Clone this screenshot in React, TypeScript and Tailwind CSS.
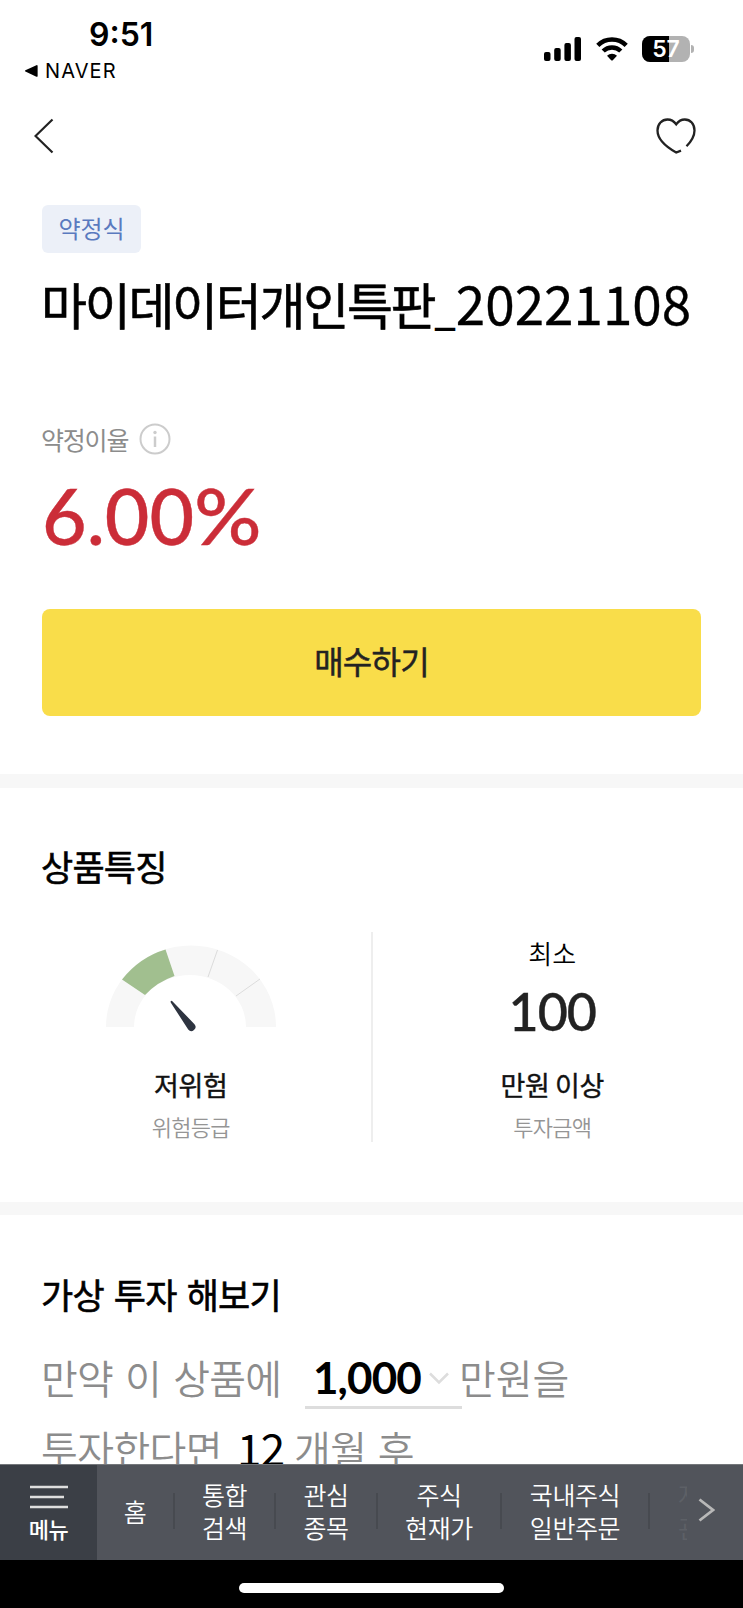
import React from 'react';

interface FeatureProps {
  children: React.ReactNode;
  value: string;
  label: string;
  className: string;
}

const StatusBar: React.FC = () => (
  <div className="h-[88px] flex justify-between font-['Inter',sans-serif] text-black">
    <div className="pl-6">
      <div className="h-8 mt-[19px] pl-[65px] text-[32px] leading-8 font-semibold">9:51</div>
      <div className="flex items-center h-6 mt-2">
        <svg width="14" height="14" viewBox="0 0 14 14">
          <path d="M12.4 1.2 1.4 6.2q-1 .7 0 1.4l11 5.2q1.2.3 1.2-.9V2q0-1.200-1.200-.8Z" fill="#000" />
        </svg>
        <span className="ml-[7px] text-[20px] leading-6 tracking-[1.1px]">NAVER</span>
      </div>
    </div>
    <div className="flex items-center gap-[15px] h-[26px] mt-9 pr-[49px]">
      <svg width="37" height="24" viewBox="0 0 37 24">
        <rect x="0" y="15" width="6.500" height="9" rx="2" />
        <rect x="10.200" y="11" width="6.500" height="13" rx="2" />
        <rect x="20.400" y="6" width="6.500" height="18" rx="2" />
        <rect x="30.500" y="0" width="6.500" height="24" rx="2" />
      </svg>
      <svg width="32" height="24" viewBox="0 0 32 24" fill="none" stroke="#000" strokeWidth="4.500">
        <path d="M1.800 8.300a20.200 20.200 0 0 1 28.400 0" />
        <path d="M7.200 14a12.600 12.600 0 0 1 17.600 0" />
        <path d="M11 18.800a7.300 7.300 0 0 1 10 0l-4.200 4.400q-.8.700-1.600 0Z" fill="#000" stroke="none" />
      </svg>
      <div className="flex items-center gap-px -ml-px">
        <div className="relative w-12 h-[26px] rounded-lg overflow-hidden bg-[#b2b2b2]">
          <div className="w-[27px] h-full bg-black" />
          <span className="absolute inset-0 text-center text-white text-[23px] leading-[26px] font-semibold">57</span>
        </div>
        <div className="w-[3px] h-2 rounded-r-full bg-[#b2b2b2]" />
      </div>
    </div>
  </div>
);

const RiskGauge: React.FC = () => (
  <svg width="172" height="88" viewBox="0 0 172 88">
    <path d="M1 82a85 81.500 0 0 1 170 0h-30a56 52 0 0 0-112 0Z" fill="#f7f7f7" />
    <path d="M17 34.500Q35 12 60.500 4.500l9 26.500Q52 37 40 50Z" fill="#a1bf8f" />
    <path d="m112.500 5-9.500 27M155 34l-24 17" stroke="#dcdcdc" />
    <path d="M65.600 56.300q1-.9 2 .1L89.500 79.200a4 4 0 0 1-6.300 5.200L65.700 57.600Z" fill="#2e3440" />
  </svg>
);

const Feature: React.FC<FeatureProps> = ({ children, value, label, className }) => (
  <div className={`flex-1 flex flex-col items-center ${className}`}>
    <div className="h-[120px] flex flex-col items-center">{children}</div>
    <div className="mt-[27px] h-8 text-[27px] leading-8 tracking-[-0.4px] text-[#111] [-webkit-text-stroke:0.4px_#111]">{value}</div>
    <div className="mt-[9px] h-8 text-[22px] leading-8 font-[350] tracking-[-0.7px] text-[#959595]">{label}</div>
  </div>
);

const Separator: React.FC = () => <div className="w-[2px] h-9 bg-[#474a50]" />;

const BottomNav: React.FC = () => (
  <nav className="h-24 flex bg-[#51545b] border-t border-[#74777b] text-[25px] leading-[33px] font-[350] text-white text-center whitespace-nowrap">
    <div className="w-[97px] bg-[#3b3f46] flex flex-col items-center">
      <svg className="mt-[19px]" width="38" height="26" viewBox="0 0 38 26" stroke="#dedede" strokeWidth="2.600">
        <path d="M0 3h38M0 13h34M0 23h38" />
      </svg>
      <div className="mt-[2px] text-[22px] leading-8 font-medium tracking-[-0.5px]">메뉴</div>
    </div>
    <div className="relative flex-1 flex items-center pb-[3px] overflow-hidden tracking-[-0.4px]">
      <div className="w-[76px]">홈</div>
      <Separator />
      <div className="w-[99px]">통합<br />검색</div>
      <Separator />
      <div className="w-[100px]">관심<br />종목</div>
      <Separator />
      <div className="w-[122px]">주식<br />현재가</div>
      <Separator />
      <div className="w-[146px]">국내주식<br />일반주문</div>
      <Separator />
      <div className="pl-7 text-[#5d6066]">자<br />관</div>
      <div className="absolute right-0 top-0 h-full w-[56px] flex items-center pb-[5px] bg-[#51545b]">
        <svg className="ml-[11px]" width="17" height="24" viewBox="0 0 17 24" fill="none" stroke="#b8b8b8" strokeWidth="2.800">
          <path d="M1.500 1.500 15 12 1.500 22.500" />
        </svg>
      </div>
    </div>
  </nav>
);

const App: React.FC = () => {
  return (
    <div className="w-[743px] h-[1608px] overflow-hidden flex flex-col bg-white text-black font-['Noto_Sans_CJK_KR',sans-serif]">
      <StatusBar />

      <header className="h-[96px] flex items-center justify-between pl-[34px] pr-[47px]">
        <svg width="20" height="36" viewBox="0 0 20 36" fill="none" stroke="#222" strokeWidth="2.200">
          <path d="M18.500 1.500 1.500 18l17 16.500" />
        </svg>
        <svg width="40" height="36" viewBox="0 0 40 36" fill="none" stroke="#222" strokeWidth="2.300">
          <path d="M25 32.600l-4.800 1.900Q1.500 24 1.500 12.500C1.500 6 6 1.500 11.500 1.500q5.200 0 8.700 4.800 3.500-4.800 8.600-4.800c5.500 0 9.700 4.500 9.700 11q0 7.500-8 15.800" />
        </svg>
      </header>

      <main className="h-[1280px] overflow-hidden">
        <section className="px-[42px] pt-[21px] h-[590px]">
          <div className="w-[99px] h-12 rounded-md bg-[#ecf0f8] text-center text-[24px] leading-[46px] text-[#5a7abf]">약정식</div>
          <h1 className="-ml-px mt-[14px] h-[70px] flex items-baseline whitespace-nowrap leading-[70px]">
            <span className="text-[50px] tracking-[-2.300px] [-webkit-text-stroke:0.6px_#000]">마이데이터개인특판</span>
            <span className="text-[38px] font-bold">_</span>
            <span className="text-[53px] [-webkit-text-stroke:0.3px_#000]">20221108</span>
          </h1>
          <div className="mt-[84px] flex items-center gap-[10px] h-9">
            <span className="-mt-px -ml-px mr-px text-[25px] leading-9 tracking-[-1.200px] text-[#8c8c8c]">약정이율</span>
            <svg width="32" height="32" viewBox="0 0 32 32" fill="none" stroke="#ccc" strokeWidth="2">
              <circle cx="16" cy="16" r="14.500" />
              <path d="M16 13.500V24" strokeWidth="2.500" />
              <circle cx="16" cy="9.500" r="1.700" fill="#ccc" stroke="none" />
            </svg>
          </div>
          <div className="mt-[12px] h-[92px] font-['Lato',sans-serif] text-[77px] leading-[92px] font-medium text-[#cb2d38] [-webkit-text-stroke:0.4px_#cb2d38]">
            6.00<span className="inline-block origin-left scale-x-[1.09]">%</span>
          </div>
          <button className="mt-[48px] pb-[5px] block w-full h-[107px] rounded-lg bg-[#f9dd4a] text-[32px] tracking-[-0.8px] text-[#222] [-webkit-text-stroke:0.5px_#222]">매수하기</button>
        </section>

        <section className="h-[428px] border-t-[14px] border-[#f7f7f7]">
          <h2 className="px-[41px] mt-[54px] h-12 text-[35px] leading-[48px] tracking-[-0.8px] [-webkit-text-stroke:0.6px_#000]">상품특징</h2>
          <div className="mt-[42px] flex h-[210px]">
            <Feature value="저위험" label="위험등급" className="pl-[11px]">
              <div className="mt-[13px]"><RiskGauge /></div>
            </Feature>
            <div className="w-[2px] bg-[#eee]" />
            <Feature value="만원 이상" label="투자금액" className="pr-[11px]">
              <div className="mt-[5px] text-[26px] leading-8 font-[350]">최소</div>
              <div className="mt-3 font-['Lato',sans-serif] text-[52px] leading-[60px] font-medium tracking-[-1px] text-[#222] [-webkit-text-stroke:0.4px_#222]">100</div>
            </Feature>
          </div>
        </section>

        <section className="border-t-[13px] border-[#f7f7f7] px-[42px]">
          <h2 className="-ml-px mt-[55px] h-12 text-[35px] leading-[48px] tracking-[-0.8px] [word-spacing:3px] [-webkit-text-stroke:0.6px_#000]">가상 투자 해보기</h2>
          <div className="mt-[22px] h-[71px] flex whitespace-nowrap text-[40px] leading-[74px] font-[350] tracking-[-0.8px] [word-spacing:4px] text-[#8c8c8c]">
            <span className="-ml-px w-[264px]">만약 이 상품에</span>
            <div className="w-[157px] h-[69px] flex items-center pl-2 pt-[8px] border-b-[3px] border-[#ddd]">
              <span className="font-['Lato',sans-serif] text-[44px] font-bold tracking-[-0.9px] text-black">1,000</span>
              <svg className="ml-2 mt-[2px]" width="20" height="13" viewBox="0 0 20 13" fill="none" stroke="#ddd" strokeWidth="2.500">
                <path d="m1 1.500 9 9 9-9" />
              </svg>
            </div>
            <span className="-ml-[3px] tracking-[0px]">만원을</span>
          </div>
          <div className="h-[76px] flex whitespace-nowrap text-[40px] leading-[74px] font-[350] tracking-[-0.6px] [word-spacing:3px] text-[#8c8c8c]">
            <span className="-ml-px w-[196px]">투자한다면</span>
            <span className="w-[57px] text-[44px] leading-[72px] font-normal text-black">12</span>
            <span>개월 후</span>
          </div>
        </section>
      </main>

      <BottomNav />
      <div className="h-12 bg-black pt-[23px]">
        <div className="mx-auto w-[265px] h-[10px] rounded-full bg-white" />
      </div>
    </div>
  );
};

export default App;
